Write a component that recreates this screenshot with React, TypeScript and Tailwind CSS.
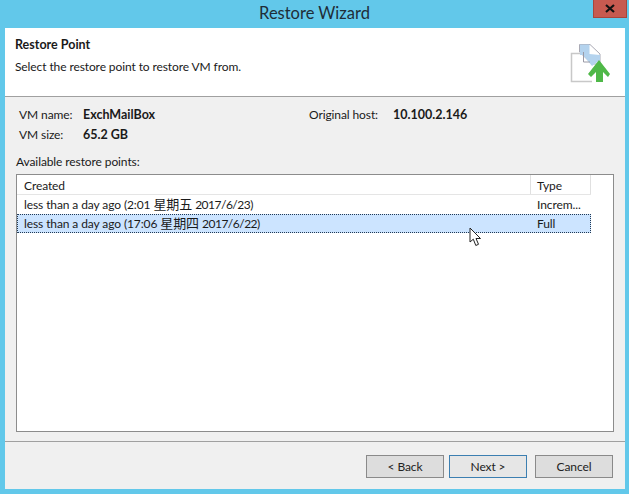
const font = "font-['Lato','Noto_Sans_CJK_SC',sans-serif]";

function WizardIcon() {
  return (
    <svg width="44" height="44" viewBox="568 42 44 44" className="mr-[13px] mt-[14px] shrink-0">
      <path d="M583 53.500H571.500V81.500H592" fill="#fff" stroke="#c8c8c8" strokeWidth="1.500" />
      <path d="M579.500 44.500H590L600 54V64H592L579.500 52Z" fill="#fff" stroke="#a9a9b4" strokeWidth="1" />
      <path d="M580 44.500H589.500V54L600 55V60L592 66L583 55H580Z" fill="#b4d3ee" />
      <path d="M583.500 52V62H590" fill="none" stroke="#9a9aa6" strokeWidth="1" />
      <path d="M599 60L610 74L608 77L603 72V82H596V72L591 77L588 74Z" fill="#4fb848" />
    </svg>
  );
}

function Button({ label, focused }: { label: string; focused?: boolean }) {
  return (
    <button
      className={
        focused
          ? "h-[23px] w-[78px] border border-[#3c7fb1] bg-[#e6e6e6] pt-[1px] text-[12px] text-[#222]"
          : "h-[23px] w-[78px] border border-[#8a8a8a] bg-[#dddddd] pt-[1px] text-[12px] text-[#222]"
      }
    >
      {label}
    </button>
  );
}

export default function App() {
  return (
    <div className={`${font} relative flex h-[494px] w-[629px] flex-col overflow-hidden bg-[#62c8ea] pb-[5px] pl-[5px] pr-[4px] text-[12px] tracking-[-0.1px] text-[#1a1a1a]`}>
      <div className="relative flex h-[28px] shrink-0 items-center justify-center pb-[1px] pr-[1px] text-[16.5px] tracking-normal text-[#1f2d38]">
        Restore Wizard
        <div className="absolute right-[-2px] top-0 flex h-[18px] w-[34px] items-center justify-center border border-[#a8453c] border-t-0 bg-[#c75a50]">
          <svg width="10" height="9" viewBox="0 0 10 9">
            <path d="M1 1L9 8M9 1L1 8" stroke="#111" strokeWidth="2.200" />
          </svg>
        </div>
      </div>

      <div className="flex min-h-0 flex-1 flex-col bg-[#f0f0f0]">
        <div className="flex h-[69px] shrink-0 justify-between border-b border-[#a0a0a0] bg-white pl-[10px]">
          <div>
            <div className="mt-[8px] text-[12.5px] font-bold leading-[17px] tracking-normal">Restore Point</div>
            <div className="mt-[5px] leading-[17px]">Select the restore point to restore VM from.</div>
          </div>
          <WizardIcon />
        </div>

        <div className="flex min-h-0 flex-1 flex-col px-[11px] pt-[8px]">
          <div className="flex pl-[3px] leading-[20px]">
            <div className="w-[290px]">
              <div className="flex">
                <span className="w-[64px]">VM name:</span>
                <b className="text-[12.5px] tracking-normal">ExchMailBox</b>
              </div>
              <div className="flex">
                <span className="w-[64px]">VM size:</span>
                <b className="text-[12.5px] tracking-normal">65.2 GB</b>
              </div>
            </div>
            <div className="flex">
              <span className="w-[84px]">Original host:</span>
              <b className="text-[12.5px] tracking-normal">10.100.2.146</b>
            </div>
          </div>

          <div className="mt-[8px] leading-[17px]">Available restore points:</div>

          <div className="mt-[4px] h-[258px] border border-[#8c8c8c] bg-white">
            <div className="flex h-[20px] w-[574px] items-center border-b border-[#e5e5e5]">
              <div className="flex h-full w-[514px] items-center border-r border-[#e0e0e0] pl-[7px] pt-[2px]">Created</div>
              <div className="flex h-full w-[60px] items-center border-r border-[#e0e0e0] pl-[6px] pt-[2px]">Type</div>
            </div>
            <div className="flex h-[19px] w-[574px] items-center">
              <div className="w-[514px] pl-[7px]">
                less than a day ago (2:01 <span className="text-[13px]">星期五</span>{" "}
                <span className="tracking-[-0.5px]">2017/6/23)</span>
              </div>
              <div className="pl-[6px]">Increm...</div>
            </div>
            <div className="flex h-[19px] w-[574px] items-center border border-dotted border-[#223a55] bg-[#cce4ff]">
              <div className="w-[513px] pl-[6px]">
                less than a day ago (17:06 <span className="text-[13px]">星期四</span>{" "}
                <span className="tracking-[-0.5px]">2017/6/22)</span>
              </div>
              <div className="pl-[6px]">Full</div>
            </div>
          </div>
        </div>

        <div className="mt-[9px] flex h-[48px] shrink-0 justify-end gap-[5px] border-t border-[#a0a0a0] pr-[12px] pt-[13px]">
          <Button label="< Back" />
          <Button label="Next >" focused />
          <div className="ml-[3px]">
            <Button label="Cancel" />
          </div>
        </div>
      </div>

      <svg width="14" height="20" viewBox="0 0 14 20" className="absolute left-[469px] top-[227px]">
        <path d="M1 1V15L4.300 12.200L6.800 18.500L9.500 17.300L7 11.500H11.500Z" fill="#fff" stroke="#222" strokeWidth="1" strokeLinejoin="miter" />
      </svg>
    </div>
  );
}
